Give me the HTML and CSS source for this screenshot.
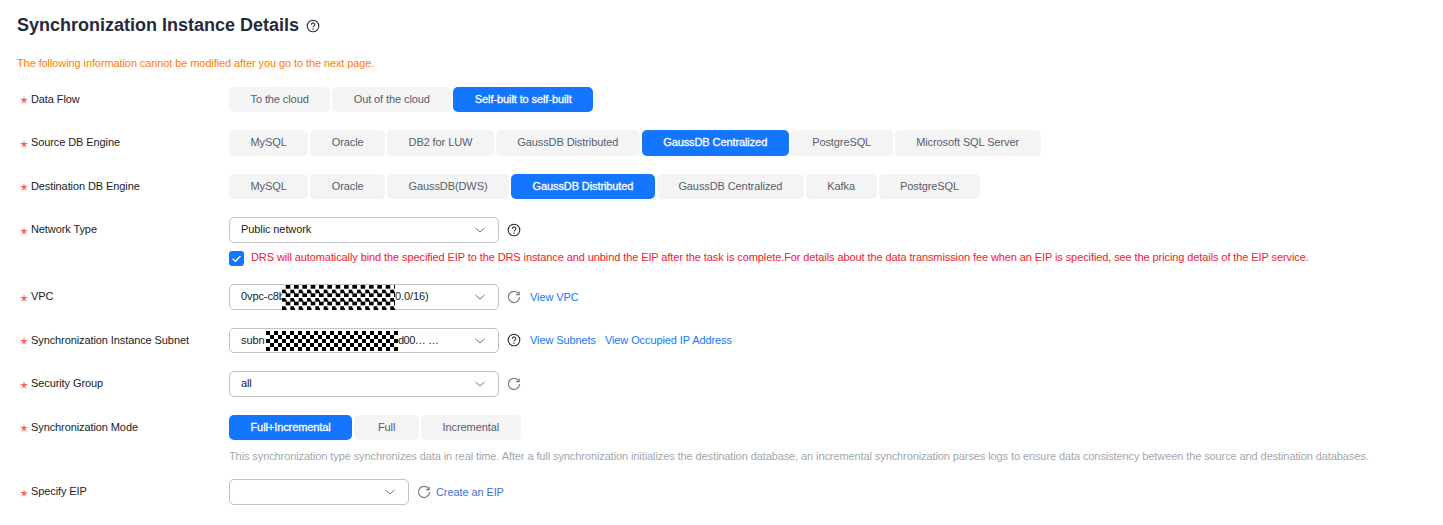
FILE: index.html
```html
<!DOCTYPE html>
<html lang="en">
<head>
<meta charset="utf-8">
<title>Synchronization Instance Details</title>
<link rel="stylesheet" href="styles.css">
</head>
<body>
<svg class="defs" width="0" height="0" aria-hidden="true">
  <symbol id="help" viewBox="0 0 14 14">
    <circle cx="7" cy="7" r="5.8" fill="none" stroke="currentColor" stroke-width="1.1"/>
    <path d="M5.3 5.7a1.75 1.75 0 1 1 2.7 1.45c-.7.45-1 .75-1 1.45" fill="none" stroke="currentColor" stroke-width="1.1"/>
    <circle cx="7" cy="10.2" r=".7" fill="currentColor"/>
  </symbol>
  <symbol id="chev" viewBox="0 0 12 12">
    <path d="M1.5 4 6 8l4.5-4" fill="none" stroke="currentColor" stroke-width="1"/>
  </symbol>
  <symbol id="refresh" viewBox="0 0 14 14">
    <path d="M11.9 4.2A5.6 5.6 0 1 0 12.6 7" fill="none" stroke="currentColor" stroke-width="1.2"/>
    <path d="M12.2 1.4v3.2H9" fill="none" stroke="currentColor" stroke-width="1.2"/>
  </symbol>
  <symbol id="req" viewBox="0 0 8 8">
    <path d="M4 0 4.75 3 8 3.05 5.25 4.75 6.4 8 4 5.85 1.6 8 2.75 4.75 0 3.05 3.25 3Z" fill="currentColor"/>
  </symbol>
</svg>
<main class="page">
  <h1 class="title">Synchronization Instance Details <svg class="ico-title"><use href="#help"/></svg></h1>
  <p class="notice">The following information cannot be modified after you go to the next page.</p>

  <div class="row row-first">
    <div class="label"><svg class="star"><use href="#req"/></svg>Data Flow</div>
    <div class="field"><div class="tabs">
      <span class="tab">To the cloud</span><span class="tab">Out of the cloud</span><span class="tab on">Self-built to self-built</span>
    </div></div>
  </div>

  <div class="row">
    <div class="label"><svg class="star"><use href="#req"/></svg>Source DB Engine</div>
    <div class="field"><div class="tabs">
      <span class="tab">MySQL</span><span class="tab">Oracle</span><span class="tab">DB2 for LUW</span><span class="tab">GaussDB Distributed</span><span class="tab on">GaussDB Centralized</span><span class="tab">PostgreSQL</span><span class="tab">Microsoft SQL Server</span>
    </div></div>
  </div>

  <div class="row">
    <div class="label"><svg class="star"><use href="#req"/></svg>Destination DB Engine</div>
    <div class="field"><div class="tabs">
      <span class="tab">MySQL</span><span class="tab">Oracle</span><span class="tab">GaussDB(DWS)</span><span class="tab on">GaussDB Distributed</span><span class="tab">GaussDB Centralized</span><span class="tab">Kafka</span><span class="tab">PostgreSQL</span>
    </div></div>
  </div>

  <div class="row">
    <div class="label"><svg class="star"><use href="#req"/></svg>Network Type</div>
    <div class="field">
      <div class="line">
        <div class="select">Public network<svg class="chev"><use href="#chev"/></svg></div>
        <svg class="ico"><use href="#help"/></svg>
      </div>
      <div class="check-line">
        <span class="check"><svg viewBox="0 0 15 15" width="15" height="15"><path d="M3.6 7.6 6.4 10.3 11.4 5" fill="none" stroke="#fff" stroke-width="1.3"/></svg></span>
        <span class="warn">DRS will automatically bind the specified EIP to the DRS instance and unbind the EIP after the task is complete.For details about the data transmission fee when an EIP is specified, see the pricing details of the EIP service.</span>
      </div>
    </div>
  </div>

  <div class="row">
    <div class="label"><svg class="star"><use href="#req"/></svg>VPC</div>
    <div class="field"><div class="line">
      <div class="select">0vpc-c8b<i class="mask mask-vpc"></i><span class="after-vpc">0.0/16)</span><svg class="chev"><use href="#chev"/></svg></div>
      <svg class="ico grey"><use href="#refresh"/></svg>
      <a class="link">View VPC</a>
    </div></div>
  </div>

  <div class="row">
    <div class="label"><svg class="star"><use href="#req"/></svg>Synchronization Instance Subnet</div>
    <div class="field"><div class="line">
      <div class="select">subn<i class="mask mask-sub"></i><span class="after-sub">d00… …</span><svg class="chev"><use href="#chev"/></svg></div>
      <svg class="ico"><use href="#help"/></svg>
      <a class="link">View Subnets</a><a class="link link-2">View Occupied IP Address</a>
    </div></div>
  </div>

  <div class="row">
    <div class="label"><svg class="star"><use href="#req"/></svg>Security Group</div>
    <div class="field"><div class="line">
      <div class="select">all<svg class="chev"><use href="#chev"/></svg></div>
      <svg class="ico grey"><use href="#refresh"/></svg>
    </div></div>
  </div>

  <div class="row">
    <div class="label"><svg class="star"><use href="#req"/></svg>Synchronization Mode</div>
    <div class="field">
      <div class="tabs">
        <span class="tab on">Full+Incremental</span><span class="tab tab-full">Full</span><span class="tab">Incremental</span>
      </div>
      <p class="hint">This synchronization type synchronizes data in real time. After a full synchronization initializes the destination database, an incremental synchronization parses logs to ensure data consistency between the source and destination databases.</p>
    </div>
  </div>

  <div class="row row-last">
    <div class="label"><svg class="star"><use href="#req"/></svg>Specify EIP</div>
    <div class="field"><div class="line">
      <div class="select small"><svg class="chev"><use href="#chev"/></svg></div>
      <svg class="ico grey"><use href="#refresh"/></svg>
      <a class="link link-eip">Create an EIP</a>
    </div></div>
  </div>
</main>
</body>
</html>
```
FILE: styles.css
```css
* { box-sizing: border-box; }
html, body { margin: 0; padding: 0; background: #fff; }
body {
  font-family: "Liberation Sans", Arial, sans-serif;
  font-size: 11px;
  letter-spacing: -0.095px;
  color: #191c24;
  overflow: hidden;
}
.defs { position: absolute; }
.page { padding: 15px 0 0 17px; width: 1443px; height: 525px; overflow: hidden; }
.title {
  margin: 0;
  height: 21px;
  line-height: 21px;
  font-size: 18px;
  font-weight: 700;
  letter-spacing: 0;
  color: #252b3a;
  display: flex;
  align-items: center;
  white-space: pre;
}
.ico-title { width: 14px; height: 14px; margin-left: 2px; color: #252b3a; }
.notice {
  margin: 21px 0 0;
  height: 13px;
  line-height: 13px;
  color: #ff7d00;
}
.row { display: flex; align-items: flex-start; margin-top: 18px; }
.row-first { margin-top: 16.6px; }
.row-last { margin-top: 16px; }
.label {
  width: 212px;
  flex: none;
  height: 25px;
  line-height: 25px;
  padding-left: 3px;
  white-space: nowrap;
  color: #191c24;
  display: flex;
  align-items: center;
}
.star {
  width: 8px;
  height: 8px;
  margin: 2px 3px 0 0;
  color: #f4605c;
  flex: none;
}
.field { flex: 1; min-width: 0; }
.tabs { display: flex; gap: 2px; }
.tab {
  height: 25.5px;
  line-height: 25px;
  padding: 0 21.5px;
  border-radius: 5px;
  background: #f4f4f4;
  color: #575d6c;
  white-space: nowrap;
}
.tab-full { width: 65px; text-align: center; padding: 0; }
.tab.on {
  background: #1476ff;
  color: #fff;
  -webkit-text-stroke: 0.3px #fff;
}
.line { display: flex; align-items: center; height: 25.5px; }
.select {
  position: relative;
  width: 270px;
  height: 25.5px;
  line-height: 23.5px;
  padding-left: 11px;
  border: 1px solid #c2c2c2;
  border-radius: 5px;
  color: #191c24;
  background: #fff;
  white-space: nowrap;
  flex: none;
}
.select.small { width: 180px; }
.chev {
  position: absolute;
  right: 12px;
  top: 6px;
  width: 12px;
  height: 12px;
  color: #777;
}
.mask {
  position: absolute;
  background-color: #fff;
  background-image: conic-gradient(#000 25%, #fff 0 50%, #000 0 75%, #fff 0);
  background-size: 8.34px 8.34px;
}
.mask-vpc { left: 52px; top: 0; width: 113px; height: 25px; }
.mask-sub { left: 36px; top: 2px; width: 132px; height: 20px; background-size: 8px 8px; background-position: 4px 0; }
.after-vpc { position: absolute; left: 165px; top: 0; }
.after-sub { position: absolute; left: 168px; top: 0; letter-spacing: -0.5px; }
.ico { width: 14px; height: 14px; margin-left: 8px; color: #252b3a; flex: none; }
.ico.grey { color: #808080; }
.link { color: #1476ff; margin-left: 9px; white-space: nowrap; }
.link-2 { margin-left: 9px; }
.link-eip { margin-left: 5px; color: #3f6fd8; }
.check-line { display: flex; align-items: flex-start; height: 15px; margin-top: 8.5px; }
.check {
  width: 15px;
  height: 15px;
  border-radius: 3px;
  background: #1476ff;
  flex: none;
}
.warn { margin-left: 7px; line-height: 12px; color: #f1202b; white-space: nowrap; }
.hint { margin: 10px 0 0; height: 13px; line-height: 13px; color: #a3a6ad; white-space: nowrap; }
```
